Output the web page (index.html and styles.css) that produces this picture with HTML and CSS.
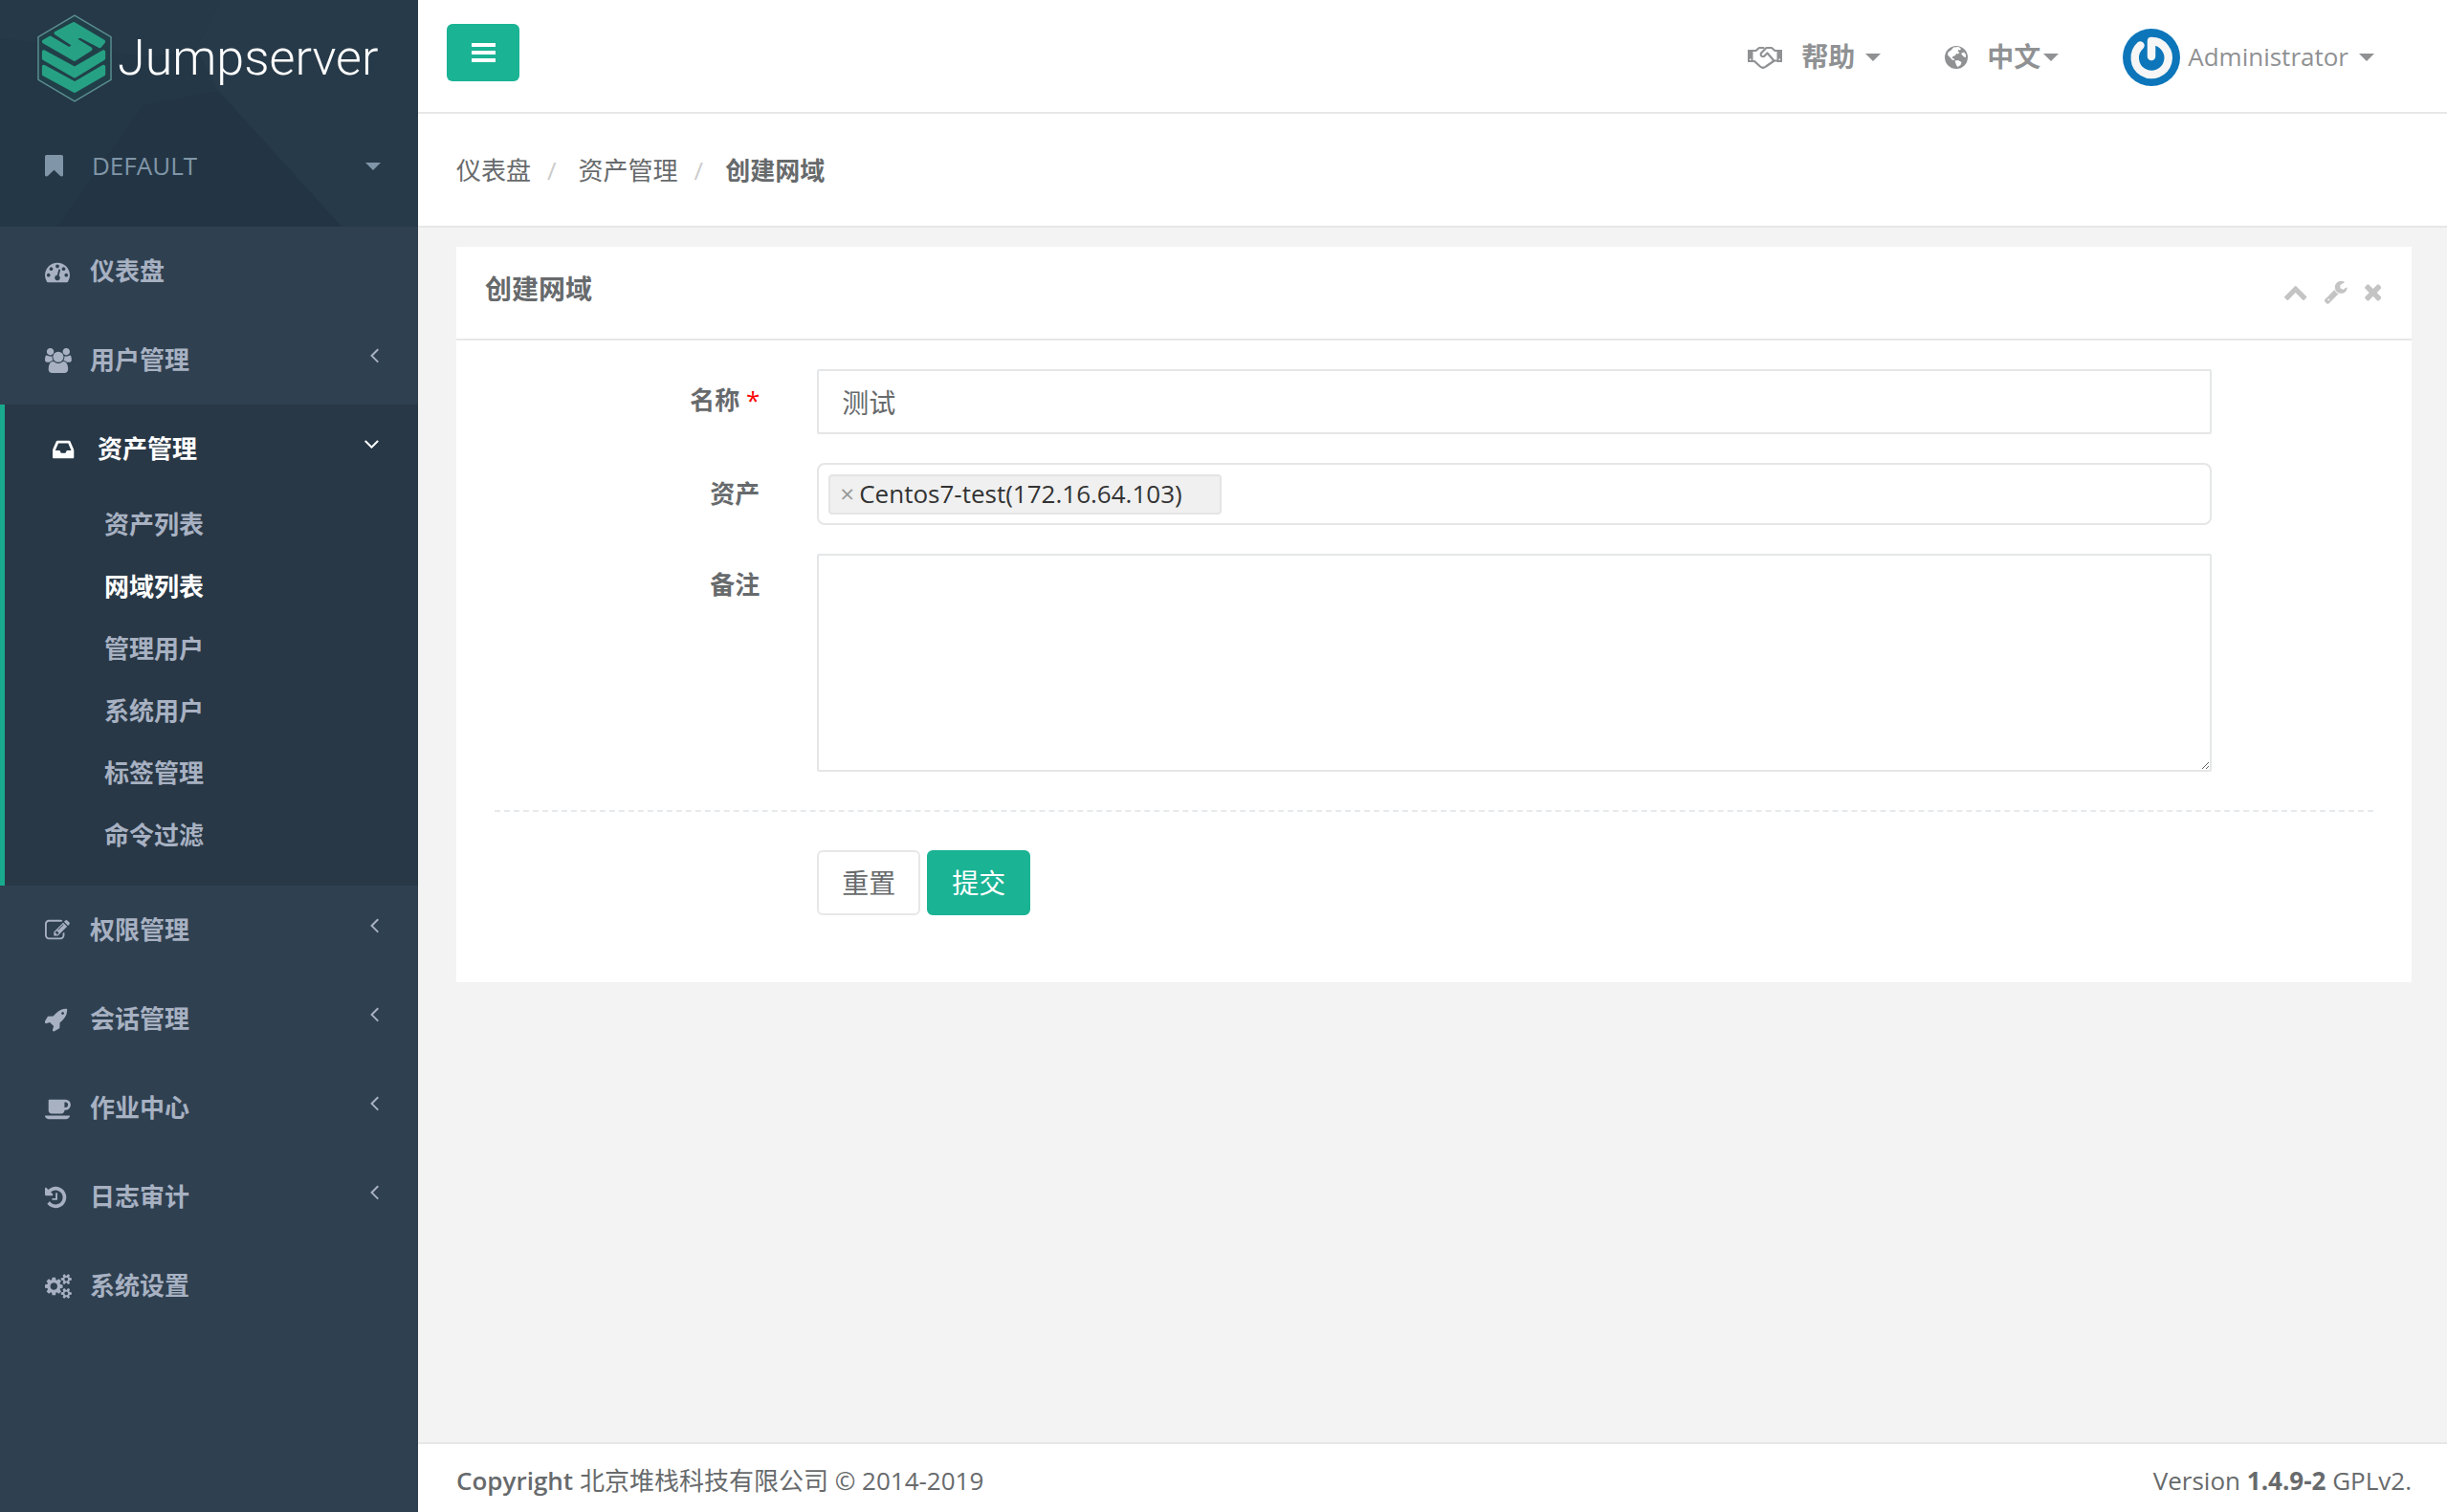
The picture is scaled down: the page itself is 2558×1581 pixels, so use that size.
FILE: index.html
```html
<!DOCTYPE html>
<html lang="zh-CN">
<head>
<meta charset="utf-8">
<meta name="viewport" content="width=device-width, initial-scale=1">
<title>Jumpserver - 创建网域</title>
<link rel="stylesheet" href="styles.css">
</head>
<body>
<svg class="sprite" aria-hidden="true">
  <symbol id="angle-left" viewBox="100 0 1130 1792"><path d="M1203 544q0 13-10 23l-393 393 393 393q10 10 10 23t-10 23l-50 50q-10 10-23 10t-23-10l-466-466q-10-10-10-23t10-23l466-466q10-10 23-10t23 10l50 50q10 10 10 23z"/></symbol>
  <symbol id="angle-down" viewBox="300 0 1130 1792"><path d="M1395 736q0 13-10 23l-466 466q-10 10-23 10t-23-10l-466-466q-10-10-10-23t10-23l50-50q10-10 23-10t23 10l393 393 393-393q10-10 23-10t23 10l50 50q10 10 10 23z"/></symbol>
</svg>
<div class="app">
  <aside class="sidebar">
    <div class="brand">
      <svg class="brand-bg" viewBox="0 0 437 237" preserveAspectRatio="none" aria-hidden="true">
        <path d="M0 0H437V237H0z" fill="#243746"/>
        <path d="M0 0H230L205 50 160 60 0 40z" fill="#263948"/>
        <path d="M230 0H437V237H357L228 95 205 50z" fill="#273a49"/>
        <path d="M228 95L357 237H60L150 110z" fill="#233544"/>
      </svg>
      <a class="logo" href="#">
        <svg class="logo-mark" viewBox="0 0 80 94" aria-hidden="true">
          <path d="M40 1L79 24V70L40 93 1 70V24z" fill="#213f48" stroke="#5b8e90" stroke-width="1.5"/>
          <g fill="#26a184" stroke="#26a184" stroke-width="4" stroke-linejoin="round">
            <path d="M20 20L39 10 71 29 67 34 46 23 39 26 57 37 40 48 7 29 14 25 34 37 40 33z"/>
            <path d="M7 40L40 58 71 40V47L40 66 7 47z"/>
            <path d="M7 56L40 74 71 56V64L40 82 7 64z"/>
          </g>
        </svg>
        <span>Jumpserver</span>
      </a>
      <button class="org" type="button">
        <svg class="org-icon" viewBox="256 128 1280 1536" aria-hidden="true"><path d="M1420 128q23 0 44 9 33 13 52.500 41t19.500 62v1289q0 34-19.500 62t-52.500 41q-19 8-44 8-48 0-83-32l-441-424-441 424q-36 33-83 33-23 0-44-9-33-13-52.500-41t-19.500-62v-1289q0-34 19.500-62t52.500-41q21-9 44-9h1048z"/></svg>
        <span>DEFAULT</span>
        <i class="caret"></i>
      </button>
    </div>
    <nav>
      <ul class="menu">
        <li><a href="#"><svg class="icon" viewBox="0 0 1930 1792" aria-hidden="true"><path d="M384 1152q0-53-37.500-90.500t-90.500-37.500-90.500 37.500-37.500 90.500 37.500 90.500 90.500 37.500 90.500-37.500 37.500-90.500zm192-448q0-53-37.500-90.500t-90.500-37.500-90.500 37.500-37.500 90.500 37.500 90.500 90.500 37.500 90.500-37.500 37.500-90.500zm428 481l101-382q6-26-7.500-48.500t-38.500-29.500-48 6.500-30 39.500l-101 382q-60 5-107 43.500t-63 98.500q-20 77 20 146t117 89 146-20 89-117q16-60-6-117t-72-91zm660-33q0-53-37.500-90.500t-90.500-37.500-90.500 37.500-37.500 90.500 37.500 90.500 90.500 37.500 90.500-37.500 37.500-90.500zm-640-640q0-53-37.500-90.500t-90.500-37.500-90.500 37.500-37.500 90.500 37.500 90.500 90.500 37.500 90.500-37.500 37.500-90.500zm448 192q0-53-37.500-90.500t-90.500-37.500-90.500 37.500-37.500 90.500 37.500 90.500 90.500 37.500 90.500-37.500 37.500-90.500zm320 448q0 261-141 483-19 29-54 29h-1402q-35 0-54-29-141-221-141-483 0-182 71-348t191-286 286-191 348-71 348 71 286 191 191 286 71 348z"/></svg><span>仪表盘</span></a></li>
        <li><a href="#"><svg class="icon" viewBox="-64 0 1930 1792" aria-hidden="true"><path d="M529 896q-162 5-265 128h-134q-82 0-138-40.500t-56-118.500q0-353 124-353 6 0 43.500 21t97.500 42.500 119 21.500q67 0 133-23-5 37-5 66 0 139 81 256zm1071 637q0 120-73 189.500t-194 69.500h-874q-121 0-194-69.500t-73-189.500q0-53 3.500-103.500t14-109 26.500-108.500 43-97.500 62-81 85.500-53.500 111.500-20q10 0 43 21.500t73 48 107 48 135 21.500 135-21.500 107-48 73-48 43-21.500q61 0 111.500 20t85.500 53.500 62 81 43 97.500 26.500 108.500 14 109 3.500 103.500zm-1024-1277q0 106-75 181t-181 75-181-75-75-181 75-181 181-75 181 75 75 181zm704 384q0 159-112.500 271.500t-271.500 112.500-271.500-112.500-112.500-271.500 112.500-271.500 271.500-112.500 271.500 112.500 112.500 271.500zm576 225q0 78-56 118.500t-138 40.500h-134q-103-123-265-128 81-117 81-256 0-29-5-66 66 23 133 23 59 0 119-21.500t97.500-42.500 43.500-21q124 0 124 353zm-128-609q0 106-75 181t-181 75-181-75-75-181 75-181 181-75 181 75 75 181z"/></svg><span>用户管理</span><svg class="arrow" aria-hidden="true"><use href="#angle-left"/></svg></a></li>
        <li class="active"><a href="#"><svg class="icon" viewBox="128 0 1930 1792" aria-hidden="true"><path d="M1151 960h316q-1-3-2.500-8.500t-2.500-7.500l-212-496h-708l-212 496q-1 3-2.500 8.500t-2.500 7.500h316l95 192h320zm513 30v482q0 26-19 45t-45 19h-1408q-26 0-45-19t-19-45v-482q0-62 25-123l238-552q10-25 36.500-42t52.500-17h832q26 0 52.500 17t36.500 42l238 552q25 61 25 123z"/></svg><span>资产管理</span><svg class="arrow" aria-hidden="true"><use href="#angle-down"/></svg></a>
          <ul class="submenu">
            <li><a href="#">资产列表</a></li>
            <li><a class="current" href="#">网域列表</a></li>
            <li><a href="#">管理用户</a></li>
            <li><a href="#">系统用户</a></li>
            <li><a href="#">标签管理</a></li>
            <li><a href="#">命令过滤</a></li>
          </ul>
        </li>
        <li><a href="#"><svg class="icon" viewBox="0 0 1930 1792" aria-hidden="true"><path d="M888 1184l116-116-152-152-116 116v56h96v96h56zm440-720q-16-16-33 1l-350 350q-17 17-1 33t33-1l350-350q17-17 1-33zm80 594v190q0 119-84.500 203.500t-203.500 84.500h-832q-119 0-203.500-84.500t-84.500-203.500v-832q0-119 84.500-203.500t203.500-84.500h832q63 0 117 25 15 7 18 23 3 17-9 29l-49 49q-14 14-32 8-23-6-45-6h-832q-66 0-113 47t-47 113v832q0 66 47 113t113 47h832q66 0 113-47t47-113v-126q0-13 9-22l64-64q15-15 35-7t20 29zm-96-738l288 288-672 672h-288v-288zm444 132l-92 92-288-288 92-92q28-28 68-28t68 28l152 152q28 28 28 68t-28 68z"/></svg><span>权限管理</span><svg class="arrow" aria-hidden="true"><use href="#angle-left"/></svg></a></li>
        <li><a href="#"><svg class="icon" viewBox="64 0 1930 1792" aria-hidden="true"><path d="M1440 448q0-40-28-68t-68-28-68 28-28 68 28 68 68 28 68-28 28-68zm224-288q0 249-75.500 430.500t-253.500 360.500q-81 80-195 176l-20 379q-2 16-16 26l-384 224q-7 4-16 4-12 0-23-9l-64-64q-13-14-8-32l85-276-281-281-276 85q-3 1-9 1-14 0-23-9l-64-64q-17-19-5-39l224-384q10-14 26-16l379-20q96-114 176-195 188-187 358-258t431-71q14 0 24 9.500t10 22.500z"/></svg><span>会话管理</span><svg class="arrow" aria-hidden="true"><use href="#angle-left"/></svg></a></li>
        <li><a href="#"><svg class="icon" viewBox="0 0 1930 1792" aria-hidden="true"><path d="M1664 640q0-80-56-136t-136-56h-64v384h64q80 0 136-56t56-136zm-1664 768h1792q0 106-75 181t-181 75h-1280q-106 0-181-75t-75-181zm1856-768q0 159-112.500 271.500t-271.500 112.500h-64v32q0 92-66 158t-158 66h-704q-92 0-158-66t-66-158v-736q0-26 19-45t45-19h1152q159 0 271.500 112.500t112.500 271.500z"/></svg><span>作业中心</span><svg class="arrow" aria-hidden="true"><use href="#angle-left"/></svg></a></li>
        <li><a href="#"><svg class="icon" viewBox="128 0 1930 1792" aria-hidden="true"><path d="M1664 896q0 156-61 298t-164 245-245 164-298 61q-172 0-327-72.500t-264-204.500q-7-10-6.500-22.500t8.500-20.500l137-138q10-9 25-9 16 2 23 12 73 95 179 147t225 52q104 0 198.500-40.500t163.500-109.500 109.500-163.500 40.500-198.500-40.500-198.500-109.500-163.500-163.500-109.500-198.500-40.500q-98 0-188 35.500t-160 101.500l137 138q31 30 14 69-17 40-59 40h-448q-26 0-45-19t-19-45v-448q0-42 40-59 39-17 69 14l130 129q107-101 244.500-156.500t284.500-55.500q156 0 298 61t245 164 164 245 61 298zm-640-288v448q0 14-9 23t-23 9h-320q-14 0-23-9t-9-23v-64q0-14 9-23t23-9h224v-352q0-14 9-23t23-9h64q14 0 23 9t9 23z"/></svg><span>日志审计</span><svg class="arrow" aria-hidden="true"><use href="#angle-left"/></svg></a></li>
        <li><a href="#"><svg class="icon" viewBox="0 0 1930 1792" aria-hidden="true"><path d="M896 896q0-106-75-181t-181-75-181 75-75 181 75 181 181 75 181-75 75-181zm768 512q0-52-38-90t-90-38-90 38-38 90q0 53 37.500 90.500t90.500 37.500 90.500-37.500 37.500-90.500zm0-1024q0-52-38-90t-90-38-90 38-38 90q0 53 37.500 90.500t90.500 37.500 90.500-37.500 37.500-90.500zm-384 421v185q0 10-7 19.500t-16 10.500l-155 24q-11 35-32 76 34 48 90 115 7 11 7 20 0 12-7 19-23 30-82.500 89.500t-78.500 59.500q-11 0-21-7l-115-90q-37 19-77 31-11 108-23 155-7 24-30 24h-186q-11 0-20-7.500t-10-17.500l-23-153q-34-10-75-31l-118 89q-7 7-20 7-11 0-21-8-144-133-144-160 0-9 7-19 10-14 41-53t47-61q-23-44-35-82l-152-24q-10-1-17-9.500t-7-19.500v-185q0-10 7-19.500t16-10.500l155-24q11-35 32-76-34-48-90-115-7-11-7-20 0-12 7-20 22-30 82-89t79-59q11 0 21 7l115 90q34-18 77-32 11-108 23-154 7-24 30-24h186q11 0 20 7.500t10 17.500l23 153q34 10 75 31l118-89q8-7 20-7 11 0 21 8 144 133 144 160 0 8-7 19-12 16-42 54t-45 60q23 48 34 82l152 23q10 2 17 10.500t7 19.500zm640 533v140q0 16-149 31-12 27-30 52 51 113 51 138 0 4-4 7-122 71-124 71-8 0-46-47t-52-68q-20 2-30 2t-30-2q-14 21-52 68t-46 47q-2 0-124-71-4-3-4-7 0-25 51-138-18-25-30-52-149-15-149-31v-140q0-16 149-31 13-29 30-52-51-113-51-138 0-4 4-7 4-2 35-20t59-34 30-16q8 0 46 46.500t52 67.500q20-2 30-2t30 2q51-71 92-112l6-2q4 0 124 70 4 3 4 7 0 25-51 138 17 23 30 52 149 15 149 31zm0-1024v140q0 16-149 31-12 27-30 52 51 113 51 138 0 4-4 7-122 71-124 71-8 0-46-47t-52-68q-20 2-30 2t-30-2q-14 21-52 68t-46 47q-2 0-124-71-4-3-4-7 0-25 51-138-18-25-30-52-149-15-149-31v-140q0-16 149-31 13-29 30-52-51-113-51-138 0-4 4-7 4-2 35-20t59-34 30-16q8 0 46 46.500t52 67.500q20-2 30-2t30 2q51-71 92-112l6-2q4 0 124 70 4 3 4 7 0 25-51 138 17 23 30 52 149 15 149 31z"/></svg><span>系统设置</span></a></li>
      </ul>
    </nav>
  </aside>

  <div class="page">
    <header class="topbar">
      <button class="toggle" type="button" aria-label="切换菜单">
        <svg viewBox="0 0 25 21" aria-hidden="true"><path d="M0 0h25v4H0zM0 8h25v4H0zM0 16h25v4H0z"/></svg>
      </button>
      <nav class="top-links">
        <a class="help" href="#">
          <svg class="handshake" viewBox="0 0 36 24" aria-hidden="true">
            <path d="M0 4H5.500V17H0z M30.500 4H36V17H30.500z"/>
            <g fill="none" stroke="currentColor" stroke-width="2.200" stroke-linejoin="round" stroke-linecap="round"><path d="M5 5H8.500L12 2H16.500M5 16H7L13 21.500Q16 24 19 21.500L25.500 17 27.500 15.500H31"/><path d="M31 5H28.500L25 2H19.500L14 7.500Q12.500 11.500 17 11L20.500 7.500 27.500 15.500"/></g>
            <path d="M2 13.500h1.500V15H2z M32.500 13.500H34V15H32.500z" fill="#fff"/>
          </svg>
          <b>帮助</b><i class="caret"></i>
        </a>
        <a class="lang" href="#">
          <svg class="globe" viewBox="0 0 24 24" aria-hidden="true"><circle cx="12" cy="12" r="12"/><path fill="#fff" d="M9 1.500L14.500 1 17 3 16 4.500 14.500 4 13.500 5.500 15.500 7 13.500 8.500 12 8 11 10 8.500 11 7.500 13 9.500 13 10 15 7.500 14.500 5.500 12 3 9.500 3.500 6.500 6 5 7.500 3.500z M17 8L20 6.500 22 9 22 12 20 11.500 18.500 10z M10.500 15.500L14 15 17.500 17 16.500 20 13.500 22 12 20z"/></svg>
          <b>中文</b><i class="caret"></i>
        </a>
        <a class="user" href="#">
          <svg class="avatar" viewBox="0 0 60 60" aria-hidden="true"><circle cx="30" cy="30" r="30" fill="#0d76ba"/><path d="M30 29V13a17.500 17.500 0 1 1-11.500 4.500" fill="none" stroke="#f6f6f6" stroke-width="8.500" stroke-linecap="round" stroke-linejoin="round"/></svg>
          <span>Administrator</span><i class="caret"></i>
        </a>
      </nav>
    </header>

    <ol class="breadcrumb">
      <li><a href="#">仪表盘</a></li>
      <li><a href="#">资产管理</a></li>
      <li><strong>创建网域</strong></li>
    </ol>

    <main>
      <section class="card">
        <div class="card-head">
          <h1>创建网域</h1>
          <div class="tools">
            <button type="button" aria-label="折叠"><svg viewBox="90 0 1612 1792"><path d="M1683 1331l-166 165q-19 19-45 19t-45-19l-531-531-531 531q-19 19-45 19t-45-19l-166-165q-19-19-19-45.500t19-45.500l742-741q19-19 45-19t45 19l742 741q19 19 19 45.500t-19 45.500z"/></svg></button>
            <button type="button" aria-label="设置"><svg viewBox="90 0 1640 1792"><path d="M448 1472q0-26-19-45t-45-19-45 19-19 45 19 45 45 19 45-19 19-45zm644-420l-682 682q-37 37-90 37-52 0-91-37l-106-108q-38-36-38-90 0-53 38-91l681-681q39 98 114.500 173.500t173.500 114.500zm634-435q0 39-23 106-47 134-164.500 217.500t-258.500 83.500q-185 0-316.500-131.500t-131.500-316.500 131.500-316.500 316.500-131.500q58 0 121.500 16.500t107.500 46.500q16 11 16 28t-16 28l-293 169v224l193 107q5-3 79-48.500t135.500-81 70.500-35.500q15 0 23.500 10t8.500 25z"/></svg></button>
            <button type="button" aria-label="关闭"><svg viewBox="296 0 1200 1792"><path d="M1490 1322q0 40-28 68l-136 136q-28 28-68 28t-68-28l-294-294-294 294q-28 28-68 28t-68-28l-136-136q-28-28-28-68t28-68l294-294-294-294q-28-28-28-68t28-68l136-136q28-28 68-28t68 28l294 294 294-294q28-28 68-28t68 28l136 136q28 28 28 68t-28 68l-294 294 294 294q28 28 28 68z"/></svg></button>
          </div>
        </div>
        <form class="form">
          <div class="row">
            <label for="name">名称 <span class="required">*</span></label>
            <div class="field"><input class="control" id="name" type="text" value="测试"></div>
          </div>
          <div class="row">
            <label for="assets">资产</label>
            <div class="field">
              <div class="picker">
                <span class="tag"><button type="button" aria-label="移除">×</button>Centos7-test(172.16.64.103)</span>
                <input id="assets" type="search">
              </div>
            </div>
          </div>
          <div class="row">
            <label for="comment">备注</label>
            <div class="field"><textarea class="control" id="comment"></textarea></div>
          </div>
          <hr>
          <div class="row">
            <div class="field actions">
              <button class="btn" type="reset">重置</button>
              <button class="btn primary" type="submit">提交</button>
            </div>
          </div>
        </form>
      </section>
    </main>

    <footer class="footer">
      <div><strong>Copyright</strong> 北京堆栈科技有限公司 © 2014-2019</div>
      <div>Version <b>1.4.9-2</b> GPLv2.</div>
    </footer>
  </div>
</div>
</body>
</html>
```
FILE: styles.css
```css
* {
  box-sizing: border-box;
}

body {
  margin: 0;
  background: #f3f3f3;
  color: #676a6c;
  font: 26px/37px "Open Sans", "Noto Sans CJK SC", sans-serif;
}

a {
  color: inherit;
  text-decoration: none;
}

ul,
ol {
  margin: 0;
  padding: 0;
  list-style: none;
}

button,
input,
textarea {
  margin: 0;
  font: inherit;
  color: inherit;
}

button {
  padding: 0;
  border: 0;
  background: none;
  cursor: pointer;
}

svg {
  display: block;
  flex: none;
  fill: currentColor;
}

.sprite {
  display: none;
}

.caret {
  flex: none;
  border: 8px solid transparent;
  border-top-color: currentColor;
  border-bottom: 0;
}

.app {
  display: grid;
  grid-template-columns: 437px minmax(0, 1fr);
  min-height: 100vh;
}

/* Sidebar */

.sidebar {
  background: #2f4050;
  color: #a7b1c2;
}

.brand {
  position: relative;
  height: 237px;
  padding: 15px 39px 0;
}

.brand-bg {
  position: absolute;
  inset: 0;
  width: 100%;
  height: 100%;
}

.logo {
  position: relative;
  display: flex;
  align-items: center;
  gap: 6px;
  height: 92px;
  color: #fff;
  font: 300 52px/64px Roboto, sans-serif;
}

.logo-mark {
  width: 78px;
  height: 92px;
}

.org {
  position: relative;
  display: flex;
  align-items: center;
  width: 100%;
  margin-top: 48px;
  padding-left: 8px;
  color: #8095a8;
}

.org-icon {
  width: 19px;
  height: 23px;
  margin-right: 30px;
}

.org .caret {
  margin-left: auto;
}

.menu a {
  display: flex;
  align-items: center;
  padding: 28px 40px 28px 47px;
  font-weight: 700;
}

.icon {
  width: 28px;
  height: 26px;
  margin-right: 19px;
}

.arrow {
  width: 18px;
  height: 26px;
  margin: -12px 0 0 auto;
}

.menu .active {
  padding-bottom: 20px;
  border-left: 5px solid #19aa8d;
  background: #293846;
}

.menu .active > a {
  padding-left: 50px;
  color: #fff;
}

.menu .submenu a {
  padding: 14px 20px 14px 104px;
}

.menu .submenu .current {
  color: #fff;
}

/* Top bar */

.page {
  display: flex;
  flex-direction: column;
}

.topbar {
  display: flex;
  justify-content: space-between;
  align-items: center;
  height: 119px;
  padding: 2px 76px 0 30px;
  border-bottom: 2px solid #e7e7e7;
  background: #fff;
}

.toggle {
  display: grid;
  place-items: center;
  width: 76px;
  height: 60px;
  margin-bottom: 9px;
  border-radius: 6px;
  background: #1ab394;
  color: #fff;
}

.toggle svg {
  width: 25px;
  height: 21px;
}

.top-links {
  display: flex;
  align-items: center;
  color: #8f9193;
}

.top-links a {
  display: flex;
  align-items: center;
}

.top-links b {
  font-size: 28px;
}

.handshake {
  width: 36px;
  height: 24px;
  margin-right: 20px;
}

.help {
  margin-right: 67px;
}

.globe {
  width: 24px;
  height: 24px;
  margin-right: 20px;
}

.lang {
  margin-right: 67px;
}

.help .caret,
.user .caret {
  margin-left: 11px;
}

.lang .caret {
  margin-left: 3px;
}

.avatar {
  width: 60px;
  height: 60px;
  margin-right: 8px;
}

/* Breadcrumb */

.breadcrumb {
  display: flex;
  padding: 41px 40px 39px;
  border-bottom: 2px solid #e7e7e7;
  background: #fff;
}

.breadcrumb li + li::before {
  content: "/";
  padding: 0 23px 0 17px;
  color: #ccc;
}

/* Form card */

main {
  flex: 1;
  padding: 20px 37px 40px 40px;
}

.card {
  background: #fff;
}

.card-head {
  display: flex;
  justify-content: space-between;
  align-items: center;
  padding: 26px 32px 33px 30px;
  border-bottom: 2px solid #e7e7e7;
}

.card-head h1 {
  margin: 0;
  font-size: 28px;
  line-height: 37px;
}

.tools {
  display: flex;
  gap: 18px;
  margin-top: 4px;
  color: #c4c4c4;
}

.tools svg {
  width: auto;
  height: 26px;
}

.form {
  padding: 30px 10px 70px;
}

.row {
  display: grid;
  grid-template-columns: 2fr 9fr 1fr;
  margin-bottom: 30px;
}

.row label {
  padding: 14px 30px 0;
  font-weight: 700;
  text-align: right;
}

.required {
  color: #f00;
  font-weight: 400;
}

.field {
  grid-column: 2;
  padding: 0 30px;
}

.control {
  display: block;
  width: 100%;
  height: 68px;
  padding: 12px 24px;
  border: 2px solid #e5e6e7;
  border-radius: 2px;
  background: #fff;
  font-size: 28px;
}

textarea.control {
  height: 228px;
  resize: vertical;
}

.picker {
  display: flex;
  align-items: center;
  min-height: 65px;
  padding: 0 10px;
  border: 2px solid #e5e6e7;
  border-radius: 8px;
}

.picker input {
  flex: 1;
  min-width: 0;
  border: 0;
  outline: 0;
  background: none;
}

.tag {
  display: flex;
  align-items: center;
  height: 42px;
  padding: 0 39px 0 10px;
  border: 2px solid #e4e4e4;
  border-radius: 4px;
  background: #f0f0f0;
  color: #333;
}

.tag button {
  margin-right: 5px;
  color: #999;
}

hr {
  margin: 40px 30px;
  border: 0;
  border-top: 2px dashed #e7eaec;
}

.form .row:last-child {
  margin-bottom: 0;
}

.actions {
  display: flex;
  gap: 7px;
}

.btn {
  width: 108px;
  height: 68px;
  border: 2px solid #e7e7e7;
  border-radius: 6px;
  background: #fff;
  font-size: 28px;
}

.btn.primary {
  border-color: #1ab394;
  background: #1ab394;
  color: #fff;
}

/* Footer */

.footer {
  display: flex;
  justify-content: space-between;
  padding: 20px 37px 14px 40px;
  border-top: 2px solid #e7e7e7;
  background: #fff;
}

.footer strong {
  font-weight: 600;
}
```
